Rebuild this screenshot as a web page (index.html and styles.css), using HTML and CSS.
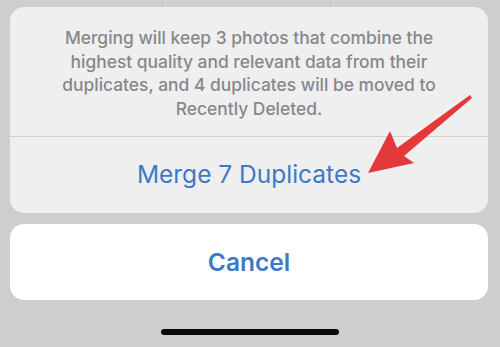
FILE: index.html
```html
<!DOCTYPE html>
<html>
<head>
<meta charset="utf-8">
<link rel="stylesheet" href="styles.css">
</head>
<body>
<div class="screen">
  <div class="bg-lines"><span></span><span></span></div>
  <div class="sheet">
    <div class="group">
      <p class="message">Merging will keep 3 photos that combine the highest quality and relevant data from their duplicates, and 4 duplicates will be moved to Recently Deleted.</p>
      <div class="action">Merge 7 Duplicates</div>
    </div>
    <div class="cancel">Cancel</div>
    <div class="home"></div>
  </div>
  <svg class="arrow" width="500" height="347" viewBox="0 0 500 347">
    <polygon points="368,173 390,131 397,148 470,95 472,98 404,156 414,163" fill="#e5383b"/>
  </svg>
</div>
</body>
</html>
```

FILE: styles.css
```css
html, body {
  margin: 0;
  padding: 0;
}
body {
  width: 500px;
  height: 347px;
  background: #cecece;
  font-family: Inter, "Noto Sans", sans-serif;
  overflow: hidden;
}
.screen {
  position: relative;
  width: 500px;
  height: 347px;
}
.bg-lines span {
  position: absolute;
  top: 0;
  width: 1px;
  height: 10px;
  background: #d9d9d9;
}
.bg-lines span:first-child { left: 165px; }
.bg-lines span:last-child { left: 333px; }
.sheet {
  display: flex;
  flex-direction: column;
  padding: 7px 12px 0 10px;
}
.group {
  background: #efeff0;
  border-radius: 14px;
  display: flex;
  flex-direction: column;
  position: relative;
}
.message {
  margin: 0;
  height: 130px;
  box-sizing: border-box;
  padding: 19px 44px 0;
  text-align: center;
  color: #87878b;
  font-size: 17.4px;
  line-height: 23.7px;
  font-weight: 500;
  border-bottom: 1px solid #d2d2d4;
}
.action {
  height: 76px;
  display: flex;
  align-items: center;
  justify-content: center;
  color: #3e79c6;
  font-size: 24.5px;
  padding-bottom: 2px;
  box-sizing: border-box;
}
.cancel {
  margin-top: 11px;
  height: 76px;
  background: #ffffff;
  border-radius: 14px;
  display: flex;
  align-items: center;
  justify-content: center;
  color: #3e79c6;
  font-size: 24.5px;
  font-weight: 600;
}
.home {
  align-self: center;
  margin: 29px 0 0 0;
  width: 178px;
  height: 6px;
  border-radius: 3px;
  background: #0a0a0a;
  transform: translateX(1px);
}
.arrow {
  position: absolute;
  left: 0;
  top: 0;
}
```
